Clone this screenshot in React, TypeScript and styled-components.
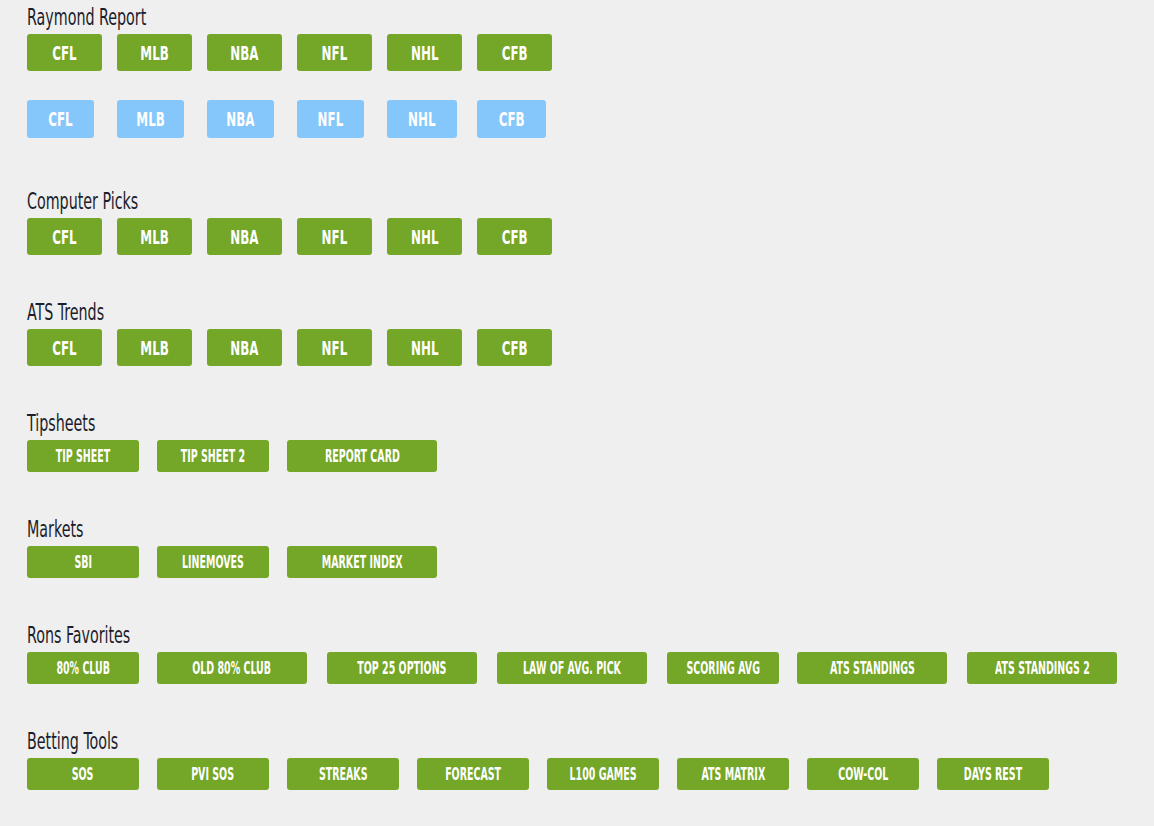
import React from "react";
import styled, { createGlobalStyle } from "styled-components";

const GlobalStyle = createGlobalStyle`
  html, body {
    margin: 0;
    padding: 0;
    background: #efefef;
  }
  body {
    font-family: "DejaVu Sans Condensed", "DejaVu Sans", sans-serif;
  }
`;

const Page = styled.div`
  min-height: 826px;
  box-sizing: border-box;
  padding: 8px 0 0 27px;
  background: #efefef;
`;

const Section = styled.section<{ $after: number }>`
  margin-bottom: ${(p) => p.$after}px;
`;

const Title = styled.h2`
  margin: 0 0 8px 0;
  font-family: "DejaVu Sans Condensed", "DejaVu Sans", sans-serif;
  font-weight: 400;
  font-size: 23px;
  line-height: 18px;
  color: #1d1d2b;
  white-space: nowrap;
`;

/* condensed display face: narrow the installed condensed sans horizontally */
const Narrow = styled.span<{ $x: number; $origin?: string }>`
  display: inline-block;
  transform: scaleX(${(p) => p.$x});
  transform-origin: ${(p) => p.$origin ?? "center"};
`;

const Row = styled.div<{ $top?: number }>`
  display: flex;
  align-items: flex-start;
  margin-top: ${(p) => p.$top ?? 0}px;
`;

const Cell = styled.div`
  width: 90px;
  flex: none;
`;

const SportButton = styled.a<{ $blue?: boolean; $w: number }>`
  display: flex;
  align-items: center;
  justify-content: center;
  box-sizing: border-box;
  width: ${(p) => p.$w}px;
  height: ${(p) => (p.$blue ? 38 : 37)}px;
  border-radius: 3px;
  background: ${(p) => (p.$blue ? "#85c6fb" : "#74a627")};
  color: #ffffff;
  font-family: "DejaVu Sans Condensed", "DejaVu Sans", sans-serif;
  font-weight: 700;
  font-size: 20px;
  line-height: 1;
  text-decoration: none;
  white-space: nowrap;
  cursor: pointer;
`;

const ToolButton = styled.a<{ $wide?: boolean }>`
  display: flex;
  align-items: center;
  justify-content: center;
  flex: none;
  box-sizing: border-box;
  width: ${(p) => (p.$wide ? 150 : 112)}px;
  height: 32px;
  margin-right: ${(p) => (p.$wide ? 20 : 18)}px;
  border-radius: 3px;
  background: #74a627;
  color: #ffffff;
  font-family: "DejaVu Sans Condensed", "DejaVu Sans", sans-serif;
  font-weight: 700;
  font-size: 17px;
  line-height: 1;
  text-transform: uppercase;
  text-decoration: none;
  white-space: nowrap;
  cursor: pointer;
`;

const sports = ["CFL", "MLB", "NBA", "NFL", "NHL", "CFB"];
const blueWidths = [67, 67, 67, 67, 70, 69];

type Tool = { label: string; wide?: boolean };

const SportRow: React.FC<{ blue?: boolean; top?: number }> = ({ blue, top }) => (
  <Row $top={top}>
    {sports.map((s, i) => (
      <Cell key={s}>
        <SportButton $blue={blue} $w={blue ? blueWidths[i] : 75}>
          <Narrow $x={0.66}>{s}</Narrow>
        </SportButton>
      </Cell>
    ))}
  </Row>
);

const ToolRow: React.FC<{ items: Tool[] }> = ({ items }) => (
  <Row>
    {items.map((t) => (
      <ToolButton key={t.label} $wide={t.wide}>
        <Narrow $x={0.62}>{t.label}</Narrow>
      </ToolButton>
    ))}
  </Row>
);

const SectionTitle: React.FC<{ children: React.ReactNode }> = ({ children }) => (
  <Title>
    <Narrow $x={0.69} $origin="left">
      {children}
    </Narrow>
  </Title>
);

const tipsheets: Tool[] = [
  { label: "Tip Sheet" },
  { label: "Tip Sheet 2" },
  { label: "Report Card", wide: true },
];

const markets: Tool[] = [
  { label: "SBI" },
  { label: "Linemoves" },
  { label: "Market Index", wide: true },
];

const favorites: Tool[] = [
  { label: "80% Club" },
  { label: "Old 80% Club", wide: true },
  { label: "Top 25 Options", wide: true },
  { label: "Law of Avg. Pick", wide: true },
  { label: "Scoring Avg" },
  { label: "ATS Standings", wide: true },
  { label: "ATS Standings 2", wide: true },
];

const tools: Tool[] = [
  { label: "SOS" },
  { label: "PVI SOS" },
  { label: "Streaks" },
  { label: "Forecast" },
  { label: "L100 Games" },
  { label: "ATS Matrix" },
  { label: "Cow-Col" },
  { label: "Days Rest" },
];

export default function App() {
  return (
    <>
      <GlobalStyle />
      <Page>
        <Section $after={54}>
          <SectionTitle>Raymond Report</SectionTitle>
          <SportRow />
          <SportRow blue top={29} />
        </Section>
        <Section $after={48}>
          <SectionTitle>Computer Picks</SectionTitle>
          <SportRow />
        </Section>
        <Section $after={48}>
          <SectionTitle>ATS Trends</SectionTitle>
          <SportRow />
        </Section>
        <Section $after={48}>
          <SectionTitle>Tipsheets</SectionTitle>
          <ToolRow items={tipsheets} />
        </Section>
        <Section $after={48}>
          <SectionTitle>Markets</SectionTitle>
          <ToolRow items={markets} />
        </Section>
        <Section $after={48}>
          <SectionTitle>Rons Favorites</SectionTitle>
          <ToolRow items={favorites} />
        </Section>
        <Section $after={0}>
          <SectionTitle>Betting Tools</SectionTitle>
          <ToolRow items={tools} />
        </Section>
      </Page>
    </>
  );
}
